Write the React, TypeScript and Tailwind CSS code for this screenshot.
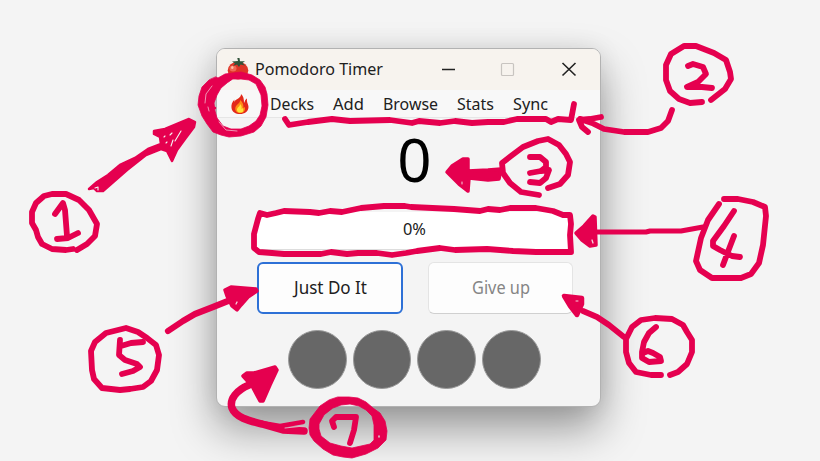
import React from "react";

const menuItems = [
  { label: "Decks", box: "w-[44px]", length: 44 },
  { label: "Add", box: "w-[31px]", length: 31 },
  { label: "Browse", box: "w-[55px]", length: 55 },
  { label: "Stats", box: "w-[37px]", length: 37 },
  { label: "Sync", box: "w-[35px]", length: 35 },
];

function FittedText({ text, length, size, className }: { text: string; length: number; size: number; className: string }) {
  return (
    <svg className={`h-[28px] shrink-0 overflow-visible ${className}`} fill="currentColor">
      <text x="0" y="20" fontSize={size} textLength={length} lengthAdjust="spacingAndGlyphs">{text}</text>
    </svg>
  );
}

function Tomato() {
  return (
    <svg className="h-[22px] w-[22px] shrink-0" viewBox="0 0 22 22">
      <ellipse cx="11" cy="12.500" rx="10.300" ry="9" fill="#df3427" />
      <ellipse cx="6" cy="10.500" rx="3.500" ry="3" fill="#f26a55" />
      <ellipse cx="5.300" cy="9.500" rx="1.200" ry="1.600" fill="#ffc0a8" />
      <path d="M11 3 5 3.500 8 5.500 6 8 10 6.500 12 9 13.500 6.500 18 7.500 15.500 5 18 3.300 13 3.300 12.500 0 10.300 0Z" fill="#31533a" />
    </svg>
  );
}

function Flame() {
  return (
    <svg className="h-[20px] w-[18px] shrink-0" viewBox="0 0 18 20">
      <path d="M10 0C10.500 4 4.500 5 3 8L3.500 5.500C1 8 0 11 .5 14 1.200 18 4.500 20 9 20 13.500 20 17.500 17.500 17.500 13 17.500 10 15.500 8.500 16 4.500 13.500 6 14 8 13 9 13 5 12.500 2 10 0Z" fill="#e3291b" />
      <path d="M9 6C9.500 9 6 10 4.500 13 3.500 16.500 5.500 19 9 19 12.500 19 14.500 17 14 13L12.500 14C12.500 10 11.500 8 9 6Z" fill="#ff8a16" />
      <path d="M9 10C9 13 6 13 6 16 6 18 7.500 18.500 9.500 18.500 12 18.500 13 17 12 14L10.500 15C11 13 10.500 11 9 10Z" fill="#ffe43b" />
    </svg>
  );
}

function Annotations() {
  return (
    <svg
      className="pointer-events-none absolute inset-0 h-[461px] w-[820px]"
      viewBox="0 0 820 461"
      fill="none"
      stroke="#e5004f"
      strokeWidth="5.8"
      strokeLinecap="round"
      strokeLinejoin="round"
    >
      {/* Mark 1: flame menu */}
      <path
        d="M216 77 218 78 225 74 233 73 241 72 252 75 260 80 265 87 267 94 268 105 266 117 261 126 254 132 241 136 229 137 221 135 213 132 207 124 202 116 198 105 199 96 202 87 209 80ZM227 83 221 88 217 95 214 103 215 111 217 118 223 126 231 129 241 129 249 126 256 121 260 115 262 106 261 95 256 84 249 80 241 79 233 79Z"
        fill="#e5004f"
        fillRule="evenodd"
        strokeWidth="0.800"
      />
      <path d="M205 103 206 94 212 86M209 111 208 107M219 122 226 130 237 131" stroke="#f4d4de" strokeWidth="0.700" />
      <path d="M212 108H215" strokeWidth="2.500" />
      <path d="M73 249 66 250 52 249 42 244 38 237 36 230 32 223 32 212 36 203 44 196 52 194 66 194 79 200 89 210 97 224 95 236 87 244 77 250" />
      <path d="M55 214 63 203 65 210 67 236M57 239 68 238 78 233" />
      <path d="M89 189 97 182 108 175 120 165 135 158 148 149 161 144 160 137 154 134 154 131 165 129 189 119 195 122 194 127 185 139 177 150 172 161 167 151 161 149 146 155 127 170 103 191 97 191 94 188Z" fill="#e5004f" strokeWidth="2.500" />
      <path d="M95 188 98 187 98 190M164 137 165 136M166 143 167 142M171 146 173 140M175 141 181 131M170 135 172 133" stroke="#f5f5f5" strokeWidth="1.100" />

      {/* Mark 2: menu bar */}
      <path d="M285 119 289 125 308 122 332 119 350 121 390 120 412 123 419 121 440 123 455 121 472 123 488 122 504 122 517 119 546 119 551 122 558 119 571 120 574 104" />
      <path d="M702 102 690 103 679 99 670 91 666 80 666 65 671 54 684 46 696 46 714 53 726 60 730 72 731 79 725 89 711 100" />
      <path d="M688 66 693 64 703 67 706 74 698 82 687 87 702 87 712 88" />
      <path d="M672 110 668 121 661 128 648 132 624 132 604 129 592 123 580 119M588 132 582 127 579 120 590 119 601 117" />

      {/* Mark 3: countdown */}
      <path d="M539 195 521 192 510 183 503 173 502 163 511 156 523 147 538 141 548 139 559 145 566 154 570 162 568 175 560 184 548 188" />
      <path d="M530 157 540 157 546 162 546 167 541 171 530 173M541 171 549 170 546 178 540 183 530 182" />
      <path d="M447 172 452 166 463 159 468 159 468 171 488 170 501 169 499 179 488 180 469 178 468 191 459 184Z" fill="#e5004f" strokeWidth="3.500" />
      <path d="M462 182V184" stroke="#f4d4de" strokeWidth="1" />

      {/* Mark 4: progress bar */}
      <path d="M260 213 267 215 276 213 284 211 310 212 319 213 330 211 342 212 361 208 384 206 405 206 411 207 454 209 480 211 488 209 500 210 510 208 536 208 553 211 563 215 570 215 571 224 570 235 571 252 536 252 513 251 487 249 455 250 440 248 417 251 406 253 392 255 377 253 358 253 347 254 331 252 321 254 308 254 284 254 272 253 259 252 254 248 254 234 258 219 260 213" />
      <path d="M724 199 738 199 753 202 765 207 766 216 763 245 759 263 751 274 741 278 712 278 700 270 696 261 701 238 708 220 719 204" />
      <path d="M734 211 724 226 713 241 713 246 720 250 732 256 740 257M734 236 729 249 723 265" />
      <path d="M576 233 584 226 593 216 595 217 596 245 590 246 582 240Z" fill="#e5004f" strokeWidth="3.500" />
      <path d="M592 240 593 243" stroke="#f4d4de" strokeWidth="1.300" />
      <path d="M596 232 646 232 650 231 681 231 703 227" strokeWidth="5" />

      {/* Mark 5: start button */}
      <path d="M130 389 120 390 102 388 94 379 92 370 91 351 95 342 106 333 126 328 138 332 147 338 156 345 159 355 157 370 151 381 143 387 130 389" />
      <path d="M120 340 119 355 125 360 137 364 140 367 133 371 122 374M121 346 131 343 143 342" />
      <path d="M168 331 183 321 195 314 213 307 228 301" strokeWidth="6.200" />
      <path d="M225 290 231 287 256 289 257 291 248 297 241 305 237 310 232 306 227 296Z" fill="#e5004f" strokeWidth="3.500" />
      <path d="M236 304 237 302" stroke="#f4d4de" strokeWidth="1.200" />

      {/* Mark 6: give-up button */}
      <path d="M661 375 651 375 636 372 629 363 626 352 626 339 632 327 641 320 655 318 672 319 683 325 687 332 692 340 692 352 687 364 678 372 670 375" />
      <path d="M656 327 649 333 644 342 642 352 642 358 649 362 661 361 660 357 653 353 648 351 643 353" />
      <path d="M624 337 609 325 597 317 583 311" />
      <path d="M564 296 582 298 582 304 577 315 570 306Z" fill="#e5004f" strokeWidth="4.500" />
      <path d="M576 301H578" stroke="#f4d4de" strokeWidth="1" />

      {/* Mark 7: session indicators */}
      <path d="M249 385C237 390 229 399 232 408C236 418 250 421 262 424L283 430 304 431" strokeWidth="7.500" />
      <path d="M251 421 280 426 303 422" strokeWidth="4.500" />
      <path d="M285 428 304 426" stroke="#dfb5c1" strokeWidth="1" />
      <path d="M243 376 247 373 254 373 275 367 277 370 270 385 263 401 260 401 252 386Z" fill="#e5004f" strokeWidth="3.500" />
      <path
        d="M338 397 349 397 358 398 366 402 373 408 380 413 385 421 387 431 386 440 378 448 366 454 352 458 343 457 333 455 323 449 314 441 310 435 309 428 310 419 320 406 329 400ZM333 408 341 405 350 404 359 406 366 410 372 416 374 425 374 440 370 444 361 446 352 448 341 446 330 443 321 436 319 429 319 424 324 415Z"
        fill="#e5004f"
        fillRule="evenodd"
        strokeWidth="0.800"
      />
      <path d="M334 427 332 421 336 417 356 417 354 430 350 443" />
      <path d="M379 436 379 437" stroke="#d9d9d9" strokeWidth="1.500" />
    </svg>
  );
}

export default function App() {
  return (
    <main className="relative h-[461px] w-[820px] overflow-hidden bg-[#f4f4f4] pl-[216px] pt-[48px] font-['Noto_Sans',sans-serif] text-[#202020]">
      <section className="flex h-[359px] w-[385px] flex-col overflow-hidden rounded-[9px] border border-[#b2b2b2] bg-[#f4f4f4] shadow-[0_22px_44px_rgba(0,0,0,0.38),0_0_24px_rgba(0,0,0,0.08)]">
        <header className="flex h-[41px] shrink-0 items-center bg-[#f7f3ee] pb-[2px] pl-[10px]">
          <Tomato />
          <FittedText text="Pomodoro Timer" length={128} size={17} className="ml-[6px] w-[130px]" />
          <svg className="ml-[55px] h-[20px] w-[142px] shrink-0" viewBox="0 0 142 20" fill="none">
            <path d="M2 10.500H15" stroke="#222" strokeWidth="1.700" />
            <rect x="61.500" y="4.500" width="12" height="12" rx="1" stroke="#c8c4c0" strokeWidth="1.200" />
            <path d="M122.500 4 135.500 16.500M135.500 4 122.500 16.500" stroke="#222" strokeWidth="1.600" />
          </svg>
        </header>
        <nav className="flex h-[28px] shrink-0 items-center border-b border-[#e6e6e6] bg-[#f8f8f8] pl-[14px]">
          <Flame />
          <div className="ml-[21px] flex gap-[19px]">
            {menuItems.map(({ label, box, length }) => (
              <FittedText key={label} text={label} length={length} size={17} className={box} />
            ))}
          </div>
        </nav>
        <div className="flex h-[94px] shrink-0 items-start justify-center pl-[12px] text-[60px] leading-[83px] text-black">0</div>
        <div className="ml-[40px] flex h-[38px] w-[314px] shrink-0 items-center justify-center border-b border-[#ddd] bg-white pb-[4px]">
          <FittedText text="0%" length={23} size={16.5} className="w-[23px]" />
        </div>
        <div className="ml-[40px] mt-[12px] flex shrink-0 gap-[25px]">
          <button className="flex h-[52px] w-[146px] items-center justify-center rounded-[6px] border-2 border-[#2d70d6] bg-[#fdfdfd]">
            <FittedText text="Just Do It" length={73} size={18.5} className="w-[73px]" />
          </button>
          <button className="flex h-[52px] w-[145px] items-center justify-center rounded-[6px] border border-[#e4e4e4] border-b-[#d0d0d0] bg-[#fdfdfd] text-[#858585]">
            <FittedText text="Give up" length={58} size={18.5} className="w-[58px]" />
          </button>
        </div>
        <div className="ml-[71px] mt-[16px] flex gap-[6px]">
          {[0, 1, 2, 3].map((session) => (
            <span key={session} className="h-[58.7px] w-[58.7px] rounded-full border border-[#999] bg-[#676767]" />
          ))}
        </div>
      </section>
      <Annotations />
    </main>
  );
}
